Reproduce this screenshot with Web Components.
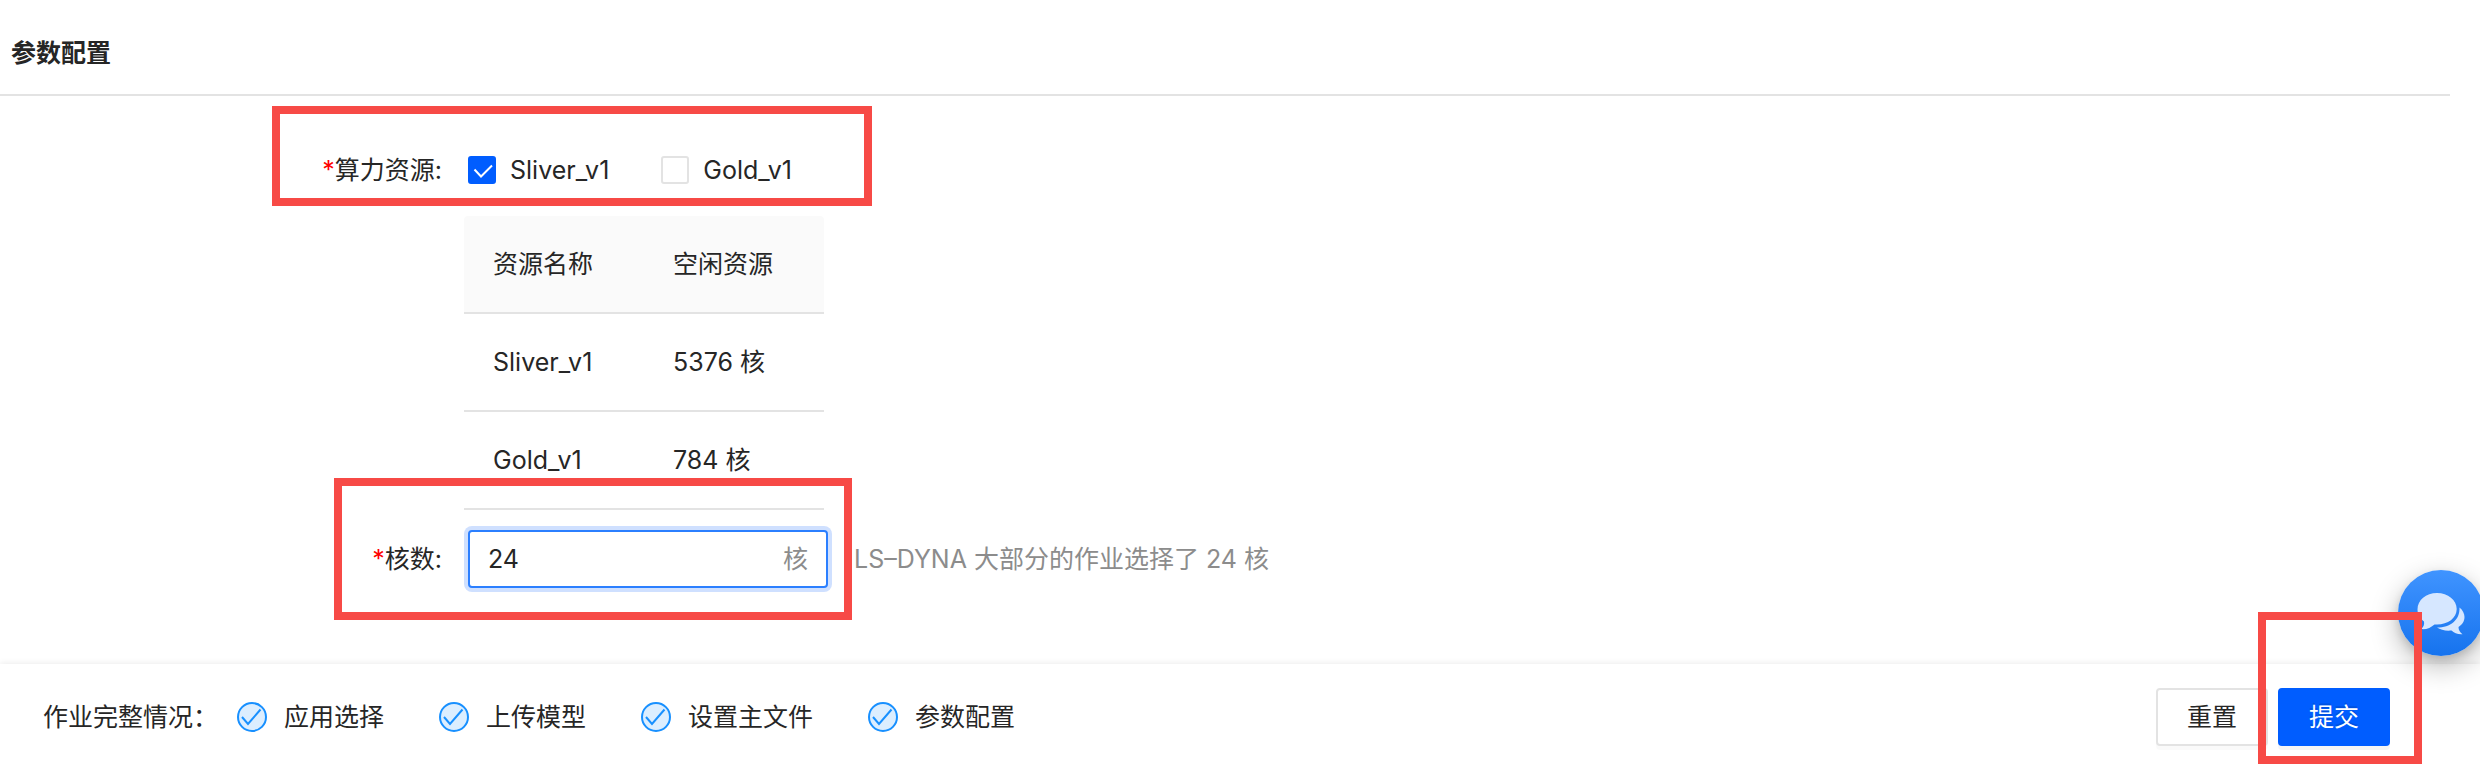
<!DOCTYPE html>
<html lang="zh-CN">
<head>
<meta charset="utf-8">
<meta name="viewport" content="width=device-width, initial-scale=1">
<title>参数配置</title>
<style>
html, body { margin: 0; height: 100%; }
body {
  --text: #262626; --muted: #8c8c8c; --line: #e3e3e3; --primary: #005dff; --mark: #f74a46;
  color: var(--text); background: #fff;
  font: 25px/36px Inter, "Noto Sans CJK SC", sans-serif;
}
</style>
</head>
<body>
<job-page>
  <section-card heading="参数配置">
    <resource-field label="算力资源">
      <check-option name="Sliver_v1" checked></check-option>
      <check-option name="Gold_v1"></check-option>
    </resource-field>
    <resource-table></resource-table>
    <core-field label="核数" value="24" unit="核">LS–DYNA 大部分的作业选择了 24 核</core-field>
  </section-card>
  <status-bar slot="footer" label="作业完整情况：">
    <status-step>应用选择</status-step>
    <status-step>上传模型</status-step>
    <status-step>设置主文件</status-step>
    <status-step>参数配置</status-step>
    <action-button slot="actions">重置</action-button>
    <action-button slot="actions" primary>提交</action-button>
  </status-bar>
  <chat-bubble slot="chat"></chat-bubble>
</job-page>
<script>
function define(name, render) {
  customElements.define(name, class extends HTMLElement {
    constructor() {
      super();
      this.attachShadow({ mode: "open" });
    }
    connectedCallback() {
      if (this.shadowRoot.firstChild) return;
      this.shadowRoot.innerHTML = render(this);
    }
  });
}

// Red frame that highlights a region of its positioned parent.
define("mark-frame", () => `
<style>
  :host { display: block; position: absolute; z-index: 5; box-sizing: border-box; border: 8px solid var(--mark); pointer-events: none; }
</style>`);

define("job-page", () => `
<style>
  :host { display: flex; flex-direction: column; min-height: 100vh; position: relative; overflow: hidden; }
  main { flex: 1; }
</style>
<main><slot></slot></main>
<slot name="footer"></slot>
<slot name="chat"></slot>`);

define("section-card", el => `
<style>
  :host { display: block; }
  header { margin-right: 30px; padding: 35px 11px 23px; border-bottom: 2px solid var(--line); }
  h2 { margin: 0; font-size: 25px; line-height: 36px; font-weight: 700; }
</style>
<header><h2>${el.getAttribute("heading")}</h2></header>
<slot></slot>`);

define("resource-field", el => `
<style>
  :host { display: grid; grid-template-columns: 442px 1fr; column-gap: 26px; padding: 56px 0 28px; position: relative; }
  .label { text-align: right; }
  .label b { color: #f00; font-weight: 400; }
  .options { display: flex; gap: 52px; }
  mark-frame { left: 272px; top: 10px; width: 600px; height: 100px; }
</style>
<div class="label" id="l"><b>*</b>${el.getAttribute("label")}:</div>
<div class="options" role="group" aria-labelledby="l"><slot></slot></div>
<mark-frame></mark-frame>`);

define("check-option", el => `
<style>
  :host { display: block; }
  label { display: flex; align-items: center; gap: 14px; }
  .box { display: grid; width: 28px; height: 28px; }
  input, svg { grid-area: 1 / 1; width: 28px; height: 28px; }
  input { appearance: none; margin: 0; box-sizing: border-box; border: 2px solid var(--line); border-radius: 3px; background: #fff; }
  input:checked { background: var(--primary); border-color: var(--primary); }
  svg { display: none; pointer-events: none; z-index: 1; }
  input:checked + svg { display: block; }
</style>
<label><span class="box"><input type="checkbox" ${el.hasAttribute("checked") ? "checked" : ""}>
<svg viewBox="0 0 28 28" fill="none" stroke="#fff" stroke-width="2"><path d="M6.5 13.5 13 20.5 24 9.5"/></svg></span>${el.getAttribute("name")}</label>`);

define("resource-table", () => `
<style>
  :host { display: block; padding-left: 464px; }
  table { width: 360px; table-layout: fixed; border-collapse: separate; border-spacing: 0; }
  th, td { box-sizing: border-box; height: 98px; padding: 0 29px; text-align: left; font-weight: 400; border-bottom: 2px solid var(--line); }
  th { background: #fafafa; }
  th:first-child { border-top-left-radius: 4px; }
  th:last-child { border-top-right-radius: 4px; }
</style>
<table>
  <thead><tr><th scope="col">资源名称</th><th scope="col">空闲资源</th></tr></thead>
  <tbody>
    <tr><td>Sliver_v1</td><td>5376 核</td></tr>
    <tr><td>Gold_v1</td><td>784 核</td></tr>
  </tbody>
</table>`);

define("core-field", el => `
<style>
  :host { display: grid; grid-template-columns: 442px 360px 1fr; column-gap: 26px; align-items: center; margin-top: 20px; position: relative; }
  label { text-align: right; }
  label b { color: #f00; font-weight: 400; }
  .box { display: flex; align-items: center; box-sizing: border-box; height: 58px; padding: 0 18px; border: 2px solid #2b7fff; border-radius: 4px; box-shadow: 0 0 0 4px #cfe0ff; background: #fff; }
  input { flex: 1; min-width: 0; border: 0; padding: 0; outline: 0; background: none; font: inherit; color: inherit; }
  .unit, .hint { color: var(--muted); }
  mark-frame { left: 334px; top: -52px; width: 518px; height: 142px; }
</style>
<label for="n"><b>*</b>${el.getAttribute("label")}:</label>
<div class="box"><input id="n" type="text" inputmode="numeric" value="${el.getAttribute("value")}"><span class="unit">${el.getAttribute("unit")}</span></div>
<div class="hint"><slot></slot></div>
<mark-frame></mark-frame>`);

define("status-bar", el => `
<style>
  :host { display: flex; align-items: center; box-sizing: border-box; height: 106px; padding: 0 90px 0 43px; background: #fff; box-shadow: 0 -1px 6px rgba(0,0,0,.08); position: relative; }
  .steps { display: flex; gap: 55px; margin-left: 19px; }
  .actions { display: flex; gap: 10px; margin-left: auto; }
  mark-frame { right: 58px; top: -52px; width: 164px; height: 152px; }
</style>
<span>${el.getAttribute("label")}</span>
<div class="steps"><slot></slot></div>
<div class="actions"><slot name="actions"></slot></div>
<mark-frame></mark-frame>`);

define("status-step", () => `
<style>
  :host { display: flex; align-items: center; gap: 17px; }
  svg { width: 30px; height: 30px; }
</style>
<svg viewBox="0 0 30 30" fill="none" stroke="#1890ff"><circle cx="15" cy="15" r="14" fill="#dceeff" stroke-width="2"/><path d="M5 15 11 22 23.500 7.500" stroke-width="2"/></svg>
<span><slot></slot></span>`);

define("action-button", el => `
<style>
  :host { display: block; }
  button { box-sizing: border-box; width: 112px; height: 58px; padding: 0; border: 2px solid var(--line); border-radius: 4px; background: #fff; color: inherit; font: inherit; box-shadow: 0 4px 0 rgba(0,0,0,.02); }
  :host([primary]) button { background: var(--primary); border-color: var(--primary); color: #fff; text-shadow: 0 -2px 0 rgba(0,0,0,.12); box-shadow: 0 4px 0 rgba(0,0,0,.04); }
</style>
<button type="button"><slot></slot></button>`);

define("chat-bubble", () => `
<style>
  :host { display: block; position: absolute; right: -4px; bottom: 114px; z-index: 1; }
  button { display: block; width: 86px; height: 86px; padding: 0; border: 0; border-radius: 50%; background: linear-gradient(#4094ff, #1673ee); box-shadow: 0 10px 28px rgba(0,0,0,.28), 0 4px 8px rgba(0,0,0,.12); }
  svg { display: block; width: 86px; height: 86px; }
</style>
<button type="button" aria-label="在线客服">
<svg viewBox="0 0 86 86" fill="#d6e7ff">
  <path d="M39 23C28 23 19.500 30 19.500 39.500c0 5 2.500 9 6.500 12 .5 3-.5 5.500-3 7.500 5 .8 10-1.500 13.500-4.600l2.500.1c11 0 19.700-6.500 19.700-15.500S50 23 39 23Z"/>
  <path d="M61.500 37.500c3.200 2.500 5 6 5 9.500 0 4.500-2.300 7.600-6 10 0 3 1.500 5.500 4 7.300-4.500.4-8.500-1.300-11-3.800-6 .5-11-.5-14.500-3C52.500 57.500 62 50 61.500 37.500Z"/>
</svg></button>`);
</script>
</body>
</html>
